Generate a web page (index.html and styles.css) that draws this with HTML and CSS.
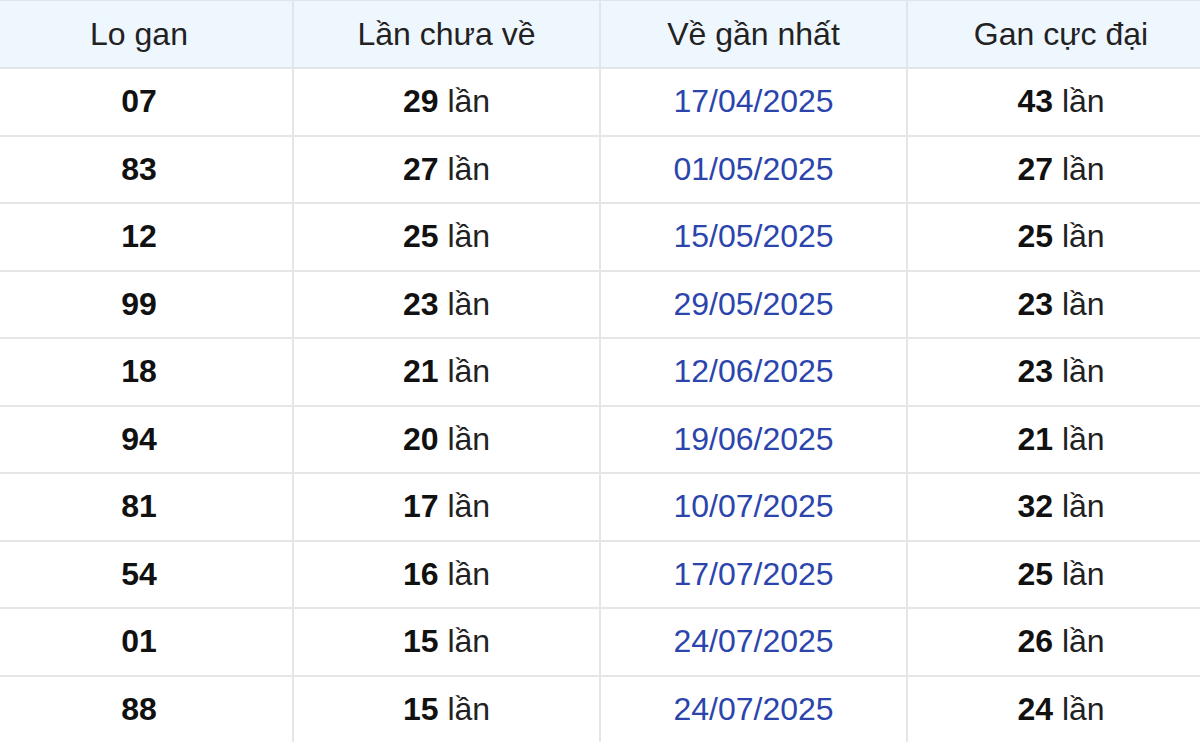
FILE: index.html
```html
<!DOCTYPE html>
<html lang="vi">
<head>
<meta charset="utf-8">
<title>Lo gan</title>
<link rel="stylesheet" href="styles.css">
</head>
<body>
<table class="gan-table">
  <colgroup>
    <col class="col"><col class="col"><col class="col"><col class="col">
  </colgroup>
  <thead>
    <tr>
      <th>Lo gan</th>
      <th>Lần chưa về</th>
      <th>Về gần nhất</th>
      <th>Gan cực đại</th>
    </tr>
  </thead>
  <tbody>
    <tr><td><b>07</b></td><td><b>29</b> lần</td><td class="date">17/04/2025</td><td><b>43</b> lần</td></tr>
    <tr><td><b>83</b></td><td><b>27</b> lần</td><td class="date">01/05/2025</td><td><b>27</b> lần</td></tr>
    <tr><td><b>12</b></td><td><b>25</b> lần</td><td class="date">15/05/2025</td><td><b>25</b> lần</td></tr>
    <tr><td><b>99</b></td><td><b>23</b> lần</td><td class="date">29/05/2025</td><td><b>23</b> lần</td></tr>
    <tr><td><b>18</b></td><td><b>21</b> lần</td><td class="date">12/06/2025</td><td><b>23</b> lần</td></tr>
    <tr><td><b>94</b></td><td><b>20</b> lần</td><td class="date">19/06/2025</td><td><b>21</b> lần</td></tr>
    <tr><td><b>81</b></td><td><b>17</b> lần</td><td class="date">10/07/2025</td><td><b>32</b> lần</td></tr>
    <tr><td><b>54</b></td><td><b>16</b> lần</td><td class="date">17/07/2025</td><td><b>25</b> lần</td></tr>
    <tr><td><b>01</b></td><td><b>15</b> lần</td><td class="date">24/07/2025</td><td><b>26</b> lần</td></tr>
    <tr><td><b>88</b></td><td><b>15</b> lần</td><td class="date">24/07/2025</td><td><b>24</b> lần</td></tr>
  </tbody>
</table>
</body>
</html>
```
FILE: styles.css
```css
html, body {
  margin: 0;
  padding: 0;
  background: #ffffff;
}

body {
  font-family: "Liberation Sans", Arial, sans-serif;
  font-size: 32px;
  color: #222222;
  overflow: hidden;
}

.gan-table {
  width: 1228px;
  margin-left: -14px;
  border-collapse: collapse;
  table-layout: fixed;
}

.col { width: 307px; }

.gan-table th,
.gan-table td {
  padding: 0;
  text-align: center;
  vertical-align: middle;
  border: 2px solid #e6e6e6;
  line-height: normal;
}

.gan-table th {
  height: 66px;
  background: #eef6fe;
  font-weight: normal;
  color: #222222;
  border-top: 1px solid #e1e5ea;
  border-bottom: 2px solid #e1e5ea;
  border-left-color: #e1e6ec;
  border-right-color: #e1e6ec;
}

.gan-table td {
  height: 65.5px;
  color: #222222;
}

.gan-table tr > :first-child { border-left: none; }
.gan-table tr > :last-child { border-right: none; }
.gan-table tbody tr:last-child td { border-bottom: none; }

.gan-table b {
  font-weight: bold;
  color: #111111;
}

.gan-table td.date {
  color: #2b45ad;
}
```
